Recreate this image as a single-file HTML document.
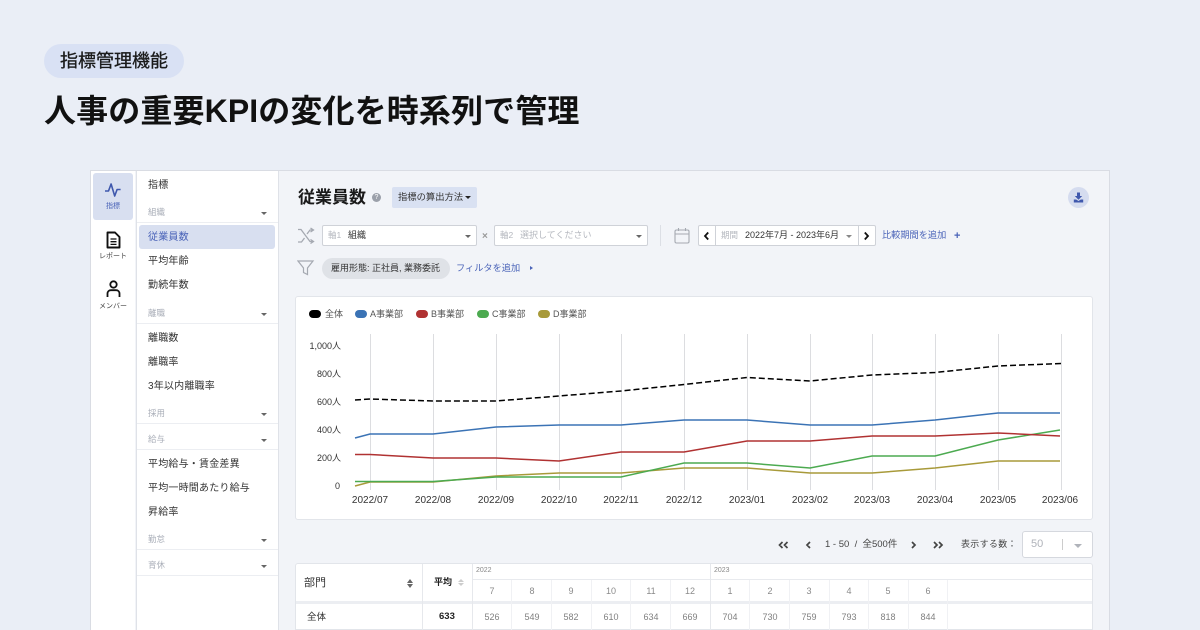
<!DOCTYPE html>
<html lang="ja"><head><meta charset="utf-8"><style>
html,body{margin:0;padding:0}
body{width:1200px;height:630px;overflow:hidden;position:relative;background:#eaeef6;font-family:"Liberation Sans","Noto Sans CJK JP",sans-serif;color:#222}
.a{position:absolute;white-space:nowrap}
.n{font-size:10px;color:#333;left:148px;line-height:14px;letter-spacing:.2px}
.h{font-size:8.5px;color:#a9aeb8;left:148px;line-height:12px}
.sep{position:absolute;left:137px;width:141px;height:1px;background:#eceef2}
.tri{position:absolute;width:0;height:0;border-left:3px solid transparent;border-right:3px solid transparent;border-top:3px solid #666}
.box{position:absolute;background:#fff;border:1px solid #cfd2d8;border-radius:2px;box-sizing:border-box}
.lg{position:absolute;width:12px;height:8px;border-radius:4px;top:310px}
.lt{font-size:9px;color:#555;top:308px;line-height:13px}
.yl{font-size:9px;color:#333;right:859px;line-height:12px}
.xl{font-size:10px;color:#333;top:495px;line-height:12px;width:60px;text-align:center}
.th{font-size:9px;color:#8a8a8a;text-align:center;width:40px;line-height:12px}
.td{font-size:9px;color:#808080;text-align:center;width:40px;line-height:12px;top:611px}
.vl{position:absolute;width:1px;background:#f0f1f4}
.blue{color:#4a63b8}
</style></head><body>
<div class="a" style="left:44px;top:44px;width:140px;height:34px;border-radius:17px;background:#d9e1f4"></div>
<div class="a" style="left:60px;top:50px;font-size:18px;line-height:22px;color:#1a1a1a;-webkit-text-stroke:.3px #1a1a1a">指標管理機能</div>
<div class="a" style="left:44px;top:90px;font-size:32px;line-height:42px;font-weight:700;color:#111;letter-spacing:.12px">人事の重要KPIの変化を時系列で管理</div>

<div class="a" style="left:90px;top:170px;width:1020px;height:460px;background:#f2f4f8;border:1px solid #d9dce3;border-bottom:0;box-sizing:border-box"></div>
<div class="a" style="left:91px;top:171px;width:44px;height:459px;background:#fff"></div>
<div class="a" style="left:93px;top:173px;width:40px;height:47px;background:#d8dff0;border-radius:3px"></div>
<svg class="a" style="left:104px;top:181px" width="18" height="18" viewBox="0 0 18 18" fill="none"><path d="M1 10h3.500l2.600-7 3.600 12 2.400-6.500h3.500" stroke="#3f58ad" stroke-width="1.600" stroke-linejoin="round"/></svg>
<div class="a blue" style="left:106px;top:202px;font-size:7px;line-height:10px">指標</div>
<svg class="a" style="left:106px;top:231px" width="15" height="18" viewBox="0 0 15 18" fill="none"><path d="M1.500 1.500h7.500l4.500 4.500v10.500H1.500z" stroke="#111" stroke-width="1.900" stroke-linejoin="round"/><path d="M4.500 8h6M4.500 10.700h6M4.500 13.400h6" stroke="#111" stroke-width="1.300"/></svg>
<div class="a" style="left:99px;top:252px;font-size:7px;line-height:10px;color:#444">レポート</div>
<svg class="a" style="left:106px;top:280px" width="15" height="17" viewBox="0 0 15 17" fill="none"><circle cx="7.500" cy="4.500" r="3.200" stroke="#111" stroke-width="1.800"/><path d="M1.500 17v-3.500c0-2 1.500-3.300 3.500-3.300h5c2 0 3.500 1.300 3.500 3.300V17" stroke="#111" stroke-width="1.800"/></svg>
<div class="a" style="left:99px;top:302px;font-size:7px;line-height:10px;color:#444">メンバー</div>

<div class="a" style="left:136px;top:171px;width:143px;height:459px;background:#fff;border-left:1px solid #dfe2e8;border-right:1px solid #dfe2e8;box-sizing:border-box"></div>
<div class="a n" style="top:179px">指標</div>
<div class="a h" style="top:206px">組織</div><div class="tri" style="left:261px;top:212px"></div><div class="sep" style="top:222px"></div>
<div class="a" style="left:139px;top:225px;width:136px;height:24px;background:#d8dff0;border-radius:3px"></div>
<div class="a n blue" style="top:231px">従業員数</div>
<div class="a n" style="top:255px">平均年齢</div>
<div class="a n" style="top:279px">勤続年数</div>
<div class="a h" style="top:307px">離職</div><div class="tri" style="left:261px;top:313px"></div><div class="sep" style="top:323px"></div>
<div class="a n" style="top:332px">離職数</div>
<div class="a n" style="top:356px">離職率</div>
<div class="a n" style="top:380px">3年以内離職率</div>
<div class="a h" style="top:407px">採用</div><div class="tri" style="left:261px;top:413px"></div><div class="sep" style="top:423px"></div>
<div class="a h" style="top:433px">給与</div><div class="tri" style="left:261px;top:439px"></div><div class="sep" style="top:449px"></div>
<div class="a n" style="top:458px">平均給与・賃金差異</div>
<div class="a n" style="top:482px">平均一時間あたり給与</div>
<div class="a n" style="top:506px">昇給率</div>
<div class="a h" style="top:533px">勤怠</div><div class="tri" style="left:261px;top:539px"></div><div class="sep" style="top:549px"></div>
<div class="a h" style="top:559px">育休</div><div class="tri" style="left:261px;top:565px"></div><div class="sep" style="top:575px"></div>

<div class="a" style="left:298px;top:186px;font-size:17px;line-height:23px;font-weight:700;color:#1a1a1a">従業員数</div>
<div class="a" style="left:372px;top:193px;width:9px;height:9px;border-radius:50%;background:#9ba0aa;color:#fff;font-size:7px;line-height:9px;text-align:center">?</div>
<div class="a" style="left:392px;top:187px;width:85px;height:21px;background:#d9e1f2;border-radius:2px"></div>
<div class="a" style="left:398px;top:191px;font-size:9.300px;line-height:13px;color:#333">指標の算出方法</div>
<div class="tri" style="left:465px;top:196px;border-top-color:#222"></div>
<div class="a" style="left:1068px;top:187px;width:21px;height:21px;border-radius:50%;background:#d5dcef"></div>
<svg class="a" style="left:1073px;top:192px" width="11" height="11" viewBox="0 0 11 11"><path d="M4 .5h3v3.500h2.200L5.500 7.700 1.800 4H4zM.8 7.500h2.400l2.300 1.500 2.300-1.500h2.400v3H.8z" fill="#3f58ad"/></svg>

<svg class="a" style="left:297px;top:227px" width="18" height="18" viewBox="0 0 18 18" fill="none" stroke="#a5a9b1" stroke-width="1.300"><path d="M1 2.500h3l9 12h3.500M1 15h3.500L7.500 11M10 7l3-4h3.500M13.500 1l3 2-3 2M13.500 12.500l3 2-3 2"/></svg>
<div class="box" style="left:322px;top:225px;width:155px;height:21px"></div>
<div class="a" style="left:328px;top:229px;font-size:8.500px;line-height:13px;color:#b5b8bf">軸1</div>
<div class="a" style="left:348px;top:229px;font-size:9px;line-height:13px;color:#333">組織</div>
<div class="tri" style="left:465px;top:235px"></div>
<div class="a" style="left:482px;top:230px;font-size:10px;line-height:13px;color:#999;font-weight:700">×</div>
<div class="box" style="left:494px;top:225px;width:154px;height:21px"></div>
<div class="a" style="left:500px;top:229px;font-size:8.500px;line-height:13px;color:#b5b8bf">軸2</div>
<div class="a" style="left:520px;top:229px;font-size:9px;line-height:13px;color:#b5b8bf">選択してください</div>
<div class="tri" style="left:636px;top:235px"></div>
<div class="a" style="left:660px;top:225px;width:1px;height:21px;background:#dcdfe5"></div>
<svg class="a" style="left:674px;top:227px" width="16" height="17" viewBox="0 0 16 17" fill="none" stroke="#a5a9b1" stroke-width="1.100"><rect x="1" y="3" width="14" height="13" rx="1.500"/><path d="M1 7h14M4.500 1v3M11.500 1v3"/></svg>
<div class="box" style="left:698px;top:225px;width:178px;height:21px"></div>
<div class="a" style="left:715px;top:226px;width:1px;height:19px;background:#cfd2d8"></div>
<div class="a" style="left:858px;top:226px;width:1px;height:19px;background:#cfd2d8"></div>
<svg class="a" style="left:703px;top:231px" width="7" height="10" viewBox="0 0 7 10" fill="none"><path d="M5.200 1.500L2 5l3.200 3.500" stroke="#111" stroke-width="1.800"/></svg>
<svg class="a" style="left:863px;top:231px" width="7" height="10" viewBox="0 0 7 10" fill="none"><path d="M1.800 1.500L5 5 1.800 8.500" stroke="#111" stroke-width="1.800"/></svg>
<div class="a" style="left:721px;top:229px;font-size:8.500px;line-height:13px;color:#b5b8bf">期間</div>
<div class="a" style="left:745px;top:229px;font-size:9px;line-height:13px;color:#333">2022年7月 - 2023年6月</div>
<div class="tri" style="left:846px;top:235px;border-top-color:#888"></div>
<div class="a blue" style="left:882px;top:229px;font-size:9.200px;line-height:13px">比較期間を追加</div>
<div class="a blue" style="left:954px;top:229px;font-size:11px;line-height:15px;font-weight:700">+</div>

<svg class="a" style="left:297px;top:260px" width="18" height="16" viewBox="0 0 18 16" fill="none" stroke="#a5a9b1" stroke-width="1.200"><path d="M1 1h15L10.500 8v6.500l-4-2V8z"/></svg>
<div class="a" style="left:322px;top:258px;width:128px;height:21px;border-radius:11px;background:#dfe2e7"></div>
<div class="a" style="left:331px;top:262px;font-size:9px;line-height:13px;color:#333">雇用形態: 正社員, 業務委託</div>
<div class="a blue" style="left:456px;top:262px;font-size:9.200px;line-height:13px">フィルタを追加</div>
<div class="a" style="left:530px;top:266px;width:0;height:0;border-top:2.500px solid transparent;border-bottom:2.500px solid transparent;border-left:3px solid #4a63b8"></div>

<div class="a" style="left:295px;top:296px;width:798px;height:224px;background:#fff;border:1px solid #e2e5ea;border-radius:3px;box-sizing:border-box"></div>
<div class="lg" style="left:309px;background:#000"></div><div class="a lt" style="left:325px">全体</div>
<div class="lg" style="left:355px;background:#3b73b5"></div><div class="a lt" style="left:370px">A事業部</div>
<div class="lg" style="left:416px;background:#b03232"></div><div class="a lt" style="left:431px">B事業部</div>
<div class="lg" style="left:477px;background:#4caa50"></div><div class="a lt" style="left:492px">C事業部</div>
<div class="lg" style="left:538px;background:#a89a3a"></div><div class="a lt" style="left:553px">D事業部</div>

<div class="a yl" style="top:340px">1,000人</div>
<div class="a yl" style="top:368px">800人</div>
<div class="a yl" style="top:396px">600人</div>
<div class="a yl" style="top:424px">400人</div>
<div class="a yl" style="top:452px">200人</div>
<div class="a yl" style="top:480px;right:860px">0</div>

<svg class="a" style="left:0;top:0" width="1200" height="630" fill="none">
<g stroke="#dcdde0" stroke-width="1"><path d="M370.500 334V490M433.500 334V490M496.500 334V490M559.500 334V490M621.500 334V490M684.500 334V490M747.500 334V490M810.500 334V490M872.500 334V490M935.500 334V490M998.500 334V490M1061.500 334V490"/></g>
<g stroke-width="1.500">
<polyline stroke="#a89a3a" points="355,486 370,482 433,482 496,476 559,473 621,473 684,468 747,468 810,473 872,473 935,468 998,461 1060,461"/>
<polyline stroke="#4caa50" points="355,481.500 370,481.500 433,481.500 496,477 559,477 621,477 684,463 747,463 810,468 872,456 935,456 998,440 1060,430"/>
<polyline stroke="#b03232" points="355,454.500 370,454.500 433,458 496,458 559,461 621,452 684,452 747,441 810,441 872,436 935,436 998,433 1060,436"/>
<polyline stroke="#3b73b5" points="355,438 370,434 433,434 496,427 559,425 621,425 684,420 747,420 810,425 872,425 935,420 998,413 1060,413"/>
<polyline stroke="#000" stroke-dasharray="6 3" points="355,400 370,399 433,401 496,401 559,396 621,391 684,384.500 747,377.500 810,381 872,375 935,372.500 998,366 1061,363.500"/>
</g></svg>
<div class="a xl" style="left:340px">2022/07</div>
<div class="a xl" style="left:403px">2022/08</div>
<div class="a xl" style="left:466px">2022/09</div>
<div class="a xl" style="left:529px">2022/10</div>
<div class="a xl" style="left:591px">2022/11</div>
<div class="a xl" style="left:654px">2022/12</div>
<div class="a xl" style="left:717px">2023/01</div>
<div class="a xl" style="left:780px">2023/02</div>
<div class="a xl" style="left:842px">2023/03</div>
<div class="a xl" style="left:905px">2023/04</div>
<div class="a xl" style="left:968px">2023/05</div>
<div class="a xl" style="left:1030px">2023/06</div>

<svg class="a" style="left:778px;top:539px" width="170" height="12" viewBox="0 0 170 12" fill="none" stroke="#444" stroke-width="1.700"><path d="M4.500 3L1.500 6l3 3M9.500 3l-3 3 3 3M32 3l-3 3 3 3M134 3l3 3-3 3M156 3l3 3-3 3M161 3l3 3-3 3"/></svg>
<div class="a" style="left:825px;top:538px;font-size:9.500px;line-height:13px;color:#444">1 - 50&nbsp; / &nbsp;全500件</div>
<div class="a" style="left:961px;top:538px;font-size:9px;line-height:13px;color:#444;letter-spacing:.3px">表示する数：</div>
<div class="box" style="left:1022px;top:531px;width:71px;height:27px;border-radius:3px;border-color:#d5d8de"></div>
<div class="a" style="left:1031px;top:538px;font-size:11px;line-height:13px;color:#b0b3ba">50</div>
<div class="a" style="left:1062px;top:539px;width:1px;height:11px;background:#ccc"></div>
<div class="tri" style="left:1074px;top:544px;border-top-color:#b0b3ba;border-left-width:4px;border-right-width:4px;border-top-width:4px"></div>

<div class="a" style="left:295px;top:563px;width:798px;height:67px;background:#fff;border:1px solid #e2e5ea;border-bottom:0;border-radius:3px 3px 0 0;box-sizing:border-box"></div>
<div class="a" style="left:296px;top:601px;width:796px;height:3px;background:#eceef2"></div>
<div class="a" style="left:296px;top:629px;width:796px;height:1px;background:#e2e5ea"></div>
<div class="a" style="left:473px;top:579px;width:619px;height:1px;background:#e8eaee"></div>
<div class="vl" style="left:422px;top:564px;height:66px;background:#e6e8ec"></div>
<div class="vl" style="left:472px;top:564px;height:66px;background:#e6e8ec"></div>
<div class="vl" style="left:710px;top:564px;height:66px;background:#e6e8ec"></div>
<div class="vl" style="left:511px;top:580px;height:50px"></div>
<div class="vl" style="left:551px;top:580px;height:50px"></div>
<div class="vl" style="left:591px;top:580px;height:50px"></div>
<div class="vl" style="left:630px;top:580px;height:50px"></div>
<div class="vl" style="left:670px;top:580px;height:50px"></div>
<div class="vl" style="left:749px;top:580px;height:50px"></div>
<div class="vl" style="left:789px;top:580px;height:50px"></div>
<div class="vl" style="left:829px;top:580px;height:50px"></div>
<div class="vl" style="left:868px;top:580px;height:50px"></div>
<div class="vl" style="left:908px;top:580px;height:50px"></div>
<div class="vl" style="left:947px;top:580px;height:50px"></div>
<div class="a" style="left:304px;top:576px;font-size:11px;line-height:15px;color:#333">部門</div>
<div class="tri" style="left:407px;top:584px;border-top-color:#666;border-left-width:3.500px;border-right-width:3.500px;border-top-width:4px"></div>
<div class="tri" style="left:407px;top:579px;border-top:0;border-bottom:4px solid #666;border-left-width:3.500px;border-right-width:3.500px"></div>
<div class="a" style="left:434px;top:576px;font-size:9px;line-height:13px;font-weight:700;color:#222">平均</div>
<div class="tri" style="left:458px;top:583px;border-top-color:#ccc"></div>
<div class="tri" style="left:458px;top:579px;border-top:0;border-bottom:3px solid #ccc"></div>
<div class="a" style="left:476px;top:566px;font-size:7px;line-height:10px;color:#888">2022</div>
<div class="a" style="left:714px;top:566px;font-size:7px;line-height:10px;color:#888">2023</div>
<div class="a th" style="left:472px;top:585px">7</div><div class="a th" style="left:512px;top:585px">8</div><div class="a th" style="left:551px;top:585px">9</div><div class="a th" style="left:591px;top:585px">10</div><div class="a th" style="left:631px;top:585px">11</div><div class="a th" style="left:670px;top:585px">12</div>
<div class="a th" style="left:710px;top:585px">1</div><div class="a th" style="left:750px;top:585px">2</div><div class="a th" style="left:789px;top:585px">3</div><div class="a th" style="left:829px;top:585px">4</div><div class="a th" style="left:868px;top:585px">5</div><div class="a th" style="left:908px;top:585px">6</div>
<div class="a" style="left:307px;top:611px;font-size:9.500px;line-height:13px;color:#333">全体</div>
<div class="a" style="left:439px;top:611px;font-size:9.500px;line-height:12px;font-weight:700;color:#222">633</div>
<div class="a td" style="left:472px">526</div><div class="a td" style="left:512px">549</div><div class="a td" style="left:551px">582</div><div class="a td" style="left:591px">610</div><div class="a td" style="left:631px">634</div><div class="a td" style="left:670px">669</div>
<div class="a td" style="left:710px">704</div><div class="a td" style="left:750px">730</div><div class="a td" style="left:789px">759</div><div class="a td" style="left:829px">793</div><div class="a td" style="left:868px">818</div><div class="a td" style="left:908px">844</div>
</body></html>
